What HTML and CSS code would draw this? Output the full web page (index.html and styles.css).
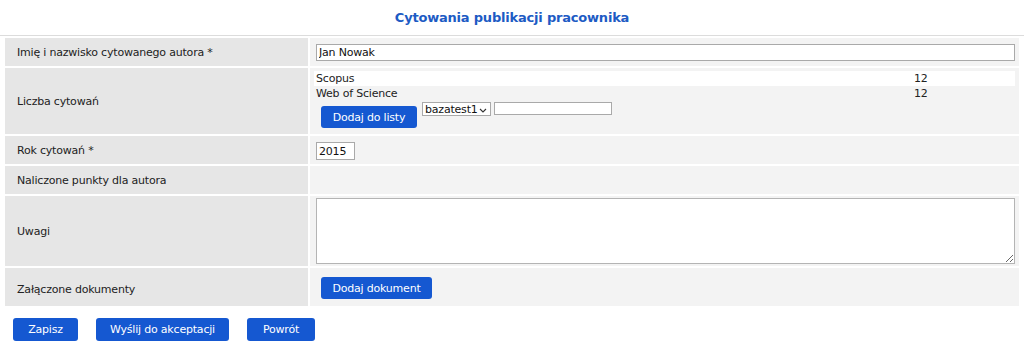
FILE: index.html
```html
<!DOCTYPE html>
<html lang="pl">
<head>
<meta charset="utf-8">
<title>Cytowania publikacji pracownika</title>
<link rel="stylesheet" href="styles.css">
</head>
<body>
<h1 class="title">Cytowania publikacji pracownika</h1>
<div class="form-wrap">
  <div class="form">
    <div class="label r1">Imię i nazwisko cytowanego autora *</div>
    <div class="value r1"><input class="text full" type="text" value="Jan Nowak"></div>

    <div class="label r2">Liczba cytowań</div>
    <div class="value r2 cites">
      <div class="cite-row odd"><span>Scopus</span><span class="num">12</span></div>
      <div class="cite-row"><span>Web of Science</span><span class="num">12</span></div>
      <div class="add-row">
        <button class="btn btn-list">Dodaj do listy</button>
        <span class="select">bazatest1<svg class="chev" width="8" height="5" viewBox="0 0 8 5"><path d="M1 1 L4 4 L7 1" fill="none" stroke="#333" stroke-width="1.1"/></svg></span>
        <input class="text small" type="text">
      </div>
    </div>

    <div class="label r3">Rok cytowań *</div>
    <div class="value r3"><input class="text year" type="text" value="2015"></div>

    <div class="label r4">Naliczone punkty dla autora</div>
    <div class="value r4"></div>

    <div class="label r5">Uwagi</div>
    <div class="value r5"><textarea class="area"></textarea></div>

    <div class="label r6">Załączone dokumenty</div>
    <div class="value r6"><button class="btn btn-doc">Dodaj dokument</button></div>
  </div>
</div>
<div class="actions">
  <button class="btn act zapisz">Zapisz</button>
  <button class="btn act wyslij">Wyślij do akceptacji</button>
  <button class="btn act powrot">Powrót</button>
</div>
</body>
</html>
```

FILE: styles.css
```css
html, body {
  margin: 0;
  padding: 0;
  background: #ffffff;
  font-family: "DejaVu Sans", Verdana, sans-serif;
  font-size: 11px;
  letter-spacing: -0.2px;
  color: #222;
}
.title {
  margin: 0;
  height: 35px;
  box-sizing: border-box;
  padding-top: 10px;
  text-align: center;
  font-size: 13px;
  font-weight: bold;
  color: #1d5bc4;
  letter-spacing: -0.2px;
}
.form-wrap {
  border-top: 1px solid #dcdcdc;
  padding: 2px 5px 0 5px;
}
.form {
  display: grid;
  grid-template-columns: 303px 1fr;
  grid-template-rows: 28px 66px 28px 28px 70px 38px;
  gap: 2px;
}
.label {
  display: flex;
  align-items: center;
  padding-left: 12px;
  background: #e6e6e6;
  color: #222;
}
.value {
  display: flex;
  align-items: center;
  background: #f3f3f3;
  padding-left: 6px;
  padding-right: 4px;
}
.label.r1 { padding-top: 1px; }
.value.r3 { align-items: flex-start; padding-top: 6px; }
.label.r3 { padding-top: 1px; }
.value.r5 { align-items: flex-start; padding-top: 2px; }
.value.r6 { align-items: flex-start; padding-top: 9px; }
.label.r6 { padding-top: 4px; }

.text {
  font-family: "DejaVu Sans", Verdana, sans-serif;
  font-size: 11px;
  letter-spacing: -0.2px;
  color: #111;
  border: 1px solid #a9a9a9;
  background: #fff;
  padding: 0 2px;
  margin: 0;
  box-sizing: border-box;
  display: block;
}
.full { width: 100%; height: 17px; margin-top: 1px; }
.year { width: 39px; height: 18px; }
.small { width: 118px; height: 13px; display: inline-block; margin-top: 1px; }

.cites {
  flex-direction: column;
  align-items: stretch;
  justify-content: flex-start;
  padding-top: 3px;
  padding-left: 4px;
}
.cite-row {
  display: grid;
  grid-template-columns: 1fr 101px;
  height: 15px;
  line-height: 15px;
  padding-left: 2px;
}
.cite-row.odd { background: #ffffff; }
.add-row {
  display: flex;
  align-items: flex-start;
  height: 27px;
}
.select {
  display: inline-flex;
  align-items: center;
  justify-content: space-between;
  width: 69px;
  height: 14px;
  box-sizing: border-box;
  border: 1px solid #a9a9a9;
  background: #fff;
  padding: 0 3px 0 2px;
  font-size: 11px;
  color: #111;
  margin: 1px 3px 0 5px;
}
.chev { margin-top: 2px; }

.btn {
  font-family: "DejaVu Sans", Verdana, sans-serif;
  font-size: 11px;
  letter-spacing: -0.2px;
  color: #ffffff;
  background: #1558d1;
  border: none;
  border-radius: 3px;
  padding: 0;
  margin: 0;
  text-align: center;
}
.btn-list { width: 96px; height: 22px; margin-top: 5px; margin-left: 7px; }
.btn-doc { width: 111px; height: 22px; margin-left: 5px; }

.area {
  display: block;
  width: 100%;
  height: 66px;
  box-sizing: border-box;
  border: 1px solid #b4b4b4;
  background: #fff;
  resize: both;
  margin: 0;
  font-family: "DejaVu Sans", Verdana, sans-serif;
  font-size: 11px;
}

.actions {
  display: flex;
  gap: 18px;
  padding: 12px 0 0 13px;
}
.act { height: 23px; }
.zapisz { width: 65px; }
.wyslij { width: 133px; }
.powrot { width: 68px; }
```
